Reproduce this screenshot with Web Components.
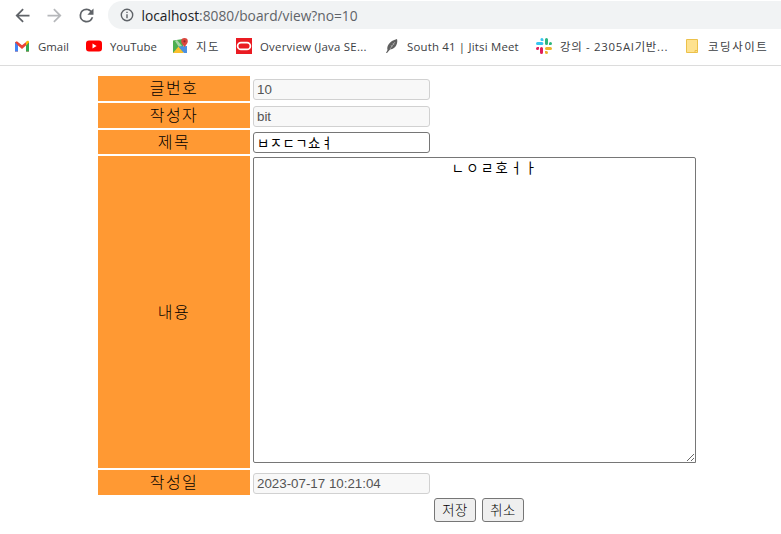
<!DOCTYPE html>
<html lang="ko">
<head>
<meta charset="utf-8">
<title>board view</title>
<style>
	html, body { margin: 0; padding: 0; background: #fff; overflow: hidden; }
	body { height: 534px; }
</style>
</head>
<body>
<browser-toolbar url-host="localhost" url-rest=":8080/board/view?no=10"></browser-toolbar>
<bookmark-bar>
	<bookmark-item width="31">
		<svg slot="icon" width="16" height="16" viewBox="0 0 16 16"><path d="M1 13.500V4.200l1.900-1 5.100 4 5.100-4 1.900 1v9.300h-3V7.400L8 11 4 7.400v6.100z" fill="#ea4335"/><path d="M1 13.500h3V7.400L1 4.200z" fill="#4285f4"/><path d="M12 13.500h3V4.200l-3 3.200z" fill="#34a853"/><path d="M12 7.400l3-3.200c0-1.400-1.300-1.800-2.100-1L12 4z" fill="#fbbc04"/></svg>
		Gmail
	</bookmark-item>
	<bookmark-item width="46">
		<svg slot="icon" width="16" height="16" viewBox="0 0 16 16"><rect y="2.500" width="16" height="11" rx="3" fill="#f00"/><path d="M6.500 5.600L10.600 8l-4.100 2.400z" fill="#fff"/></svg>
		YouTube
	</bookmark-item>
	<bookmark-item width="23" style="--icon-gap: 7px; --label-spacing: 1.500px">
		<svg slot="icon" width="16" height="16" viewBox="0 0 16 16"><path d="M0 2.500l10-1.500v14H0z" fill="#4caf50"/><path d="M0 15l5.500-6.500L11 15z" fill="#fbc02d"/><path d="M5.500 8.500L11 15h3V8z" fill="#4a90e2"/><path d="M4 2l5 6-3.500 .5L2 3z" fill="#a5d6a7"/><path d="M11.500 0A3.300 3.300 0 0 0 8.200 3.300c0 2.400 3.300 5.700 3.300 5.700s3.300-3.300 3.300-5.700A3.300 3.300 0 0 0 11.500 0z" fill="#d9463e"/><circle cx="11.500" cy="3.300" r="1.100" fill="#8c2b26"/></svg>
		지도
	</bookmark-item>
	<bookmark-item width="108" style="--label-spacing: .25px">
		<svg slot="icon" width="16" height="16" viewBox="0 0 16 16"><rect width="16" height="16" fill="#ea1b22"/><rect x="1.600" y="4.600" width="12.800" height="6.800" rx="3.400" fill="none" stroke="#fff" stroke-width="1.700"/></svg>
		Overview (Java SE...
	</bookmark-item>
	<bookmark-item width="112" style="--icon-gap: 6px; --label-spacing: .2px">
		<svg slot="icon" width="16" height="16" viewBox="0 0 16 16"><path d="M1 15l1.500-3C1.500 8.500 4 3 12 1c1 3.500-.5 9.500-7 10.500L2 15z" fill="#5f5f5f"/><path d="M5 11l5-7M6 7l1 2M8 5l1 2" stroke="#b5b5b5" stroke-width=".7" fill="none"/></svg>
		South 41 | Jitsi Meet
	</bookmark-item>
	<bookmark-item width="109" style="--label-spacing: .7px">
		<svg slot="icon" width="16" height="16" viewBox="0 0 16 16"><path d="M5.900 0a1.500 1.500 0 0 0 0 3h1.500V1.500A1.500 1.500 0 0 0 5.900 0zM1.500 4a1.500 1.500 0 0 0 0 3h4.400a1.500 1.500 0 0 0 0-3z" fill="#36c5f0"/><path d="M16 5.500a1.500 1.500 0 0 0-3 0V7h1.500A1.500 1.500 0 0 0 16 5.500zM12 5.500V1.500a1.500 1.500 0 0 0-3 0v4a1.500 1.500 0 0 0 3 0z" fill="#2eb67d"/><path d="M10.500 16a1.500 1.500 0 0 0 0-3H9v1.500a1.500 1.500 0 0 0 1.500 1.500zM10.500 12h4a1.500 1.500 0 0 0 0-3h-4a1.500 1.500 0 0 0 0 3z" fill="#ecb22e"/><path d="M0 10.500a1.500 1.500 0 0 0 3 0V9H1.500A1.500 1.500 0 0 0 0 10.500zM4 10.500v4a1.500 1.500 0 0 0 3 0v-4a1.500 1.500 0 0 0-3 0z" fill="#e01e5a"/></svg>
		강의 - 2305AI기반...
	</bookmark-item>
	<bookmark-item width="60" style="--icon-gap: 6px; --label-spacing: 1.600px">
		<svg slot="icon" width="12" height="16" viewBox="0 0 12 16"><path d="M.5 1.500h11V14.500H.5z" fill="#fee28f" stroke="#ecc14a"/><path d="M9 14.500v-2h2.500" fill="none" stroke="#ecc14a"/></svg>
		코딩사이트
	</bookmark-item>
</bookmark-bar>
<board-form>
	<form-row label="글번호" height="25"><form-field value="10" disabled></form-field></form-row>
	<form-row label="작성자" height="25"><form-field value="bit" disabled></form-field></form-row>
	<form-row label="제목" height="24"><form-field value="ㅂㅈㄷㄱ쇼ㅕ" style="--field-spacing: .5px"></form-field></form-row>
	<form-row label="내용" height="312"><form-area value="ㄴㅇㄹ호ㅓㅏ"></form-area></form-row>
	<form-row label="작성일" height="25"><form-field value="2023-07-17 10:21:04" disabled></form-field></form-row>
	<board-actions><action-button>저장</action-button><action-button>취소</action-button></board-actions>
</board-form>
<script>
	const SANS = '"Open Sans", "Noto Sans CJK KR", sans-serif';
	const FORM_FONT = '"Liberation Sans", "Noto Sans CJK KR", sans-serif';

	class BrowserToolbar extends HTMLElement {
		connectedCallback() {
			const host = this.getAttribute('url-host');
			const rest = this.getAttribute('url-rest');
			this.attachShadow({ mode: 'open' }).innerHTML = `
			<style>
				:host { display: flex; align-items: center; height: 30px; box-sizing: border-box; padding-left: 11.500px; }
				svg { display: block; flex: none; }
				.nav { margin-right: 11px; width: 21px; height: 21px; }
				.url { flex: 1; height: 28px; display: flex; align-items: center; background: #f1f3f4; border-radius: 14px 0 0 14px; padding-left: 12px; font: 13.750px ${SANS}; color: #5f6368; }
				.url svg { margin-right: 8px; }
				b { font-weight: 400; color: #202124; }
			</style>
			<svg class="nav" viewBox="0 0 24 24" fill="#5f6368"><path d="M20 11H7.830l5.590-5.590L12 4l-8 8 8 8 1.410-1.410L7.830 13H20z"/></svg>
			<svg class="nav" viewBox="0 0 24 24" fill="#b6b8bb"><path d="M4 11h12.170l-5.590-5.590L12 4l8 8-8 8-1.410-1.410L16.170 13H4z"/></svg>
			<svg class="nav" viewBox="0 0 24 24" fill="#5f6368"><path d="M17.650 6.350A7.960 7.960 0 0 0 12 4a8 8 0 1 0 7.730 10h-2.080A6 6 0 1 1 12 6c1.660 0 3.140.69 4.220 1.780L13 11h7V4z"/></svg>
			<div class="url">
				<svg width="14" height="14" viewBox="0 0 14 14" fill="none"><circle cx="7" cy="7" r="5.700" stroke="#5f6368" stroke-width="1.400"/><path d="M7 6.200v4M7 3.700v1.400" stroke="#5f6368" stroke-width="1.400"/></svg>
				<span><b>${host}</b>${rest}</span>
			</div>`;
		}
	}

	class BookmarkBar extends HTMLElement {
		connectedCallback() {
			this.attachShadow({ mode: 'open' }).innerHTML = `
			<style>
				:host { display: flex; align-items: center; gap: 17px; height: 36px; box-sizing: border-box; padding: 0 0 3px 14px; border-bottom: 1px solid #dcdcdc; overflow: hidden; }
			</style>
			<slot></slot>`;
		}
	}

	class BookmarkItem extends HTMLElement {
		connectedCallback() {
			this.attachShadow({ mode: 'open' }).innerHTML = `
			<style>
				:host { display: flex; align-items: center; flex: none; font: 11.400px ${SANS}; color: #3c4043; white-space: nowrap; }
				.icon { display: flex; width: 16px; margin-right: var(--icon-gap, 8px); }
				.label { width: ${this.getAttribute('width')}px; letter-spacing: var(--label-spacing, 0); }
				::slotted(svg) { display: block; }
			</style>
			<span class="icon"><slot name="icon"></slot></span>
			<span class="label"><slot></slot></span>`;
		}
	}

	class BoardForm extends HTMLElement {
		connectedCallback() {
			this.attachShadow({ mode: 'open' }).innerHTML = `
			<style>
				:host { display: flex; flex-direction: column; gap: 2px; padding: 10px 0 0 98px; font: 300 16px ${FORM_FONT}; color: #000; }
			</style>
			<slot></slot>`;
		}
	}

	class FormRow extends HTMLElement {
		connectedCallback() {
			this.attachShadow({ mode: 'open' }).innerHTML = `
			<style>
				:host { display: grid; grid-template-columns: 152px 1fr; column-gap: 3px; height: ${this.getAttribute('height')}px; }
				.label { display: flex; align-items: center; justify-content: center; background: #f93; letter-spacing: 1.500px; line-height: 22px; padding-top: 1px; box-sizing: border-box; }
				.field { display: flex; align-items: flex-end; padding-bottom: 1px; }
			</style>
			<div class="label">${this.getAttribute('label')}</div>
			<div class="field"><slot></slot></div>`;
		}
	}

	class FormField extends HTMLElement {
		connectedCallback() {
			const root = this.attachShadow({ mode: 'open' });
			root.innerHTML = `
			<style>
				:host { display: block; }
				input { display: block; box-sizing: border-box; width: 177px; height: 21px; margin: 0; padding: 1px 3px; font: 400 13.333px ${FORM_FONT}; letter-spacing: var(--field-spacing, 0); border: 1px solid #767676; border-radius: 3px; background: #fff; color: #000; }
				input:disabled { background: #f8f8f8; border-color: #d1d1d1; color: #545454; }
			</style>
			<input type="text">`;
			const input = root.querySelector('input');
			input.value = this.getAttribute('value');
			input.disabled = this.hasAttribute('disabled');
		}
	}

	class FormArea extends HTMLElement {
		connectedCallback() {
			const root = this.attachShadow({ mode: 'open' });
			root.innerHTML = `
			<style>
				:host { display: block; }
				textarea { display: block; box-sizing: border-box; width: 443px; height: 306px; margin: 0 0 4px; padding: 2px 2px 2px 44px; font: 400 13.333px/17px ${FORM_FONT}; letter-spacing: 2.300px; text-align: center; border: 1px solid #767676; border-radius: 2px 2px 0 2px; background: #fff; color: #000; }
			</style>
			<textarea></textarea>`;
			root.querySelector('textarea').value = this.getAttribute('value');
		}
	}

	class BoardActions extends HTMLElement {
		connectedCallback() {
			this.attachShadow({ mode: 'open' }).innerHTML = `
			<style>
				:host { display: flex; gap: 6px; margin: 1px 0 0 336px; }
			</style>
			<slot></slot>`;
		}
	}

	class ActionButton extends HTMLElement {
		connectedCallback() {
			this.attachShadow({ mode: 'open' }).innerHTML = `
			<style>
				:host { display: block; }
				button { display: block; box-sizing: border-box; width: 42px; height: 24px; margin: 0; padding: 0 0 1px; font: 300 13.333px ${FORM_FONT}; letter-spacing: .5px; color: #000; background: #efefef; border: 1px solid #767676; border-radius: 3px; }
			</style>
			<button type="button"><slot></slot></button>`;
		}
	}

	customElements.define('browser-toolbar', BrowserToolbar);
	customElements.define('bookmark-bar', BookmarkBar);
	customElements.define('bookmark-item', BookmarkItem);
	customElements.define('board-form', BoardForm);
	customElements.define('form-row', FormRow);
	customElements.define('form-field', FormField);
	customElements.define('form-area', FormArea);
	customElements.define('board-actions', BoardActions);
	customElements.define('action-button', ActionButton);
</script>
</body>
</html>
